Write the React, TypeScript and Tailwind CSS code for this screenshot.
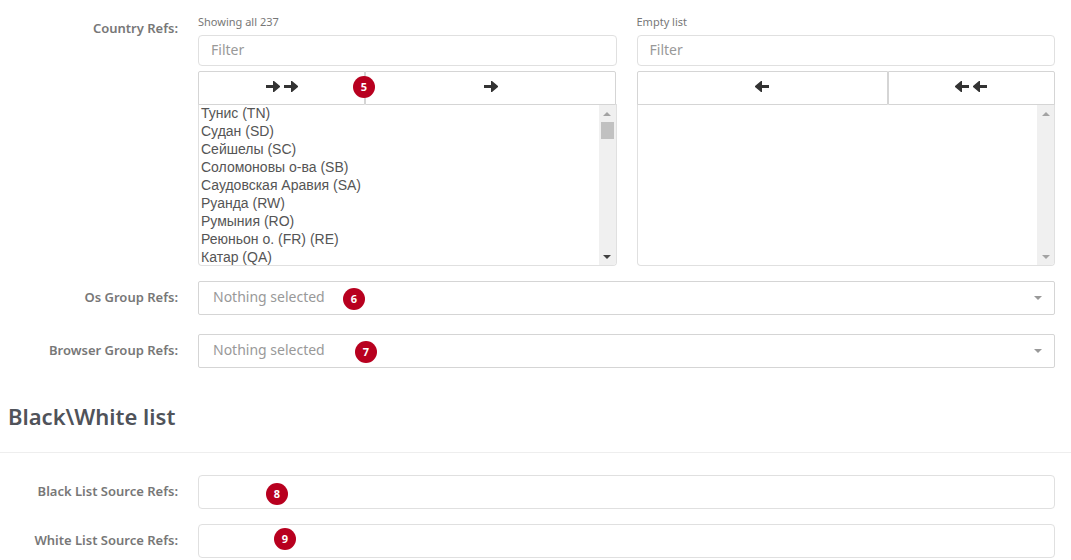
import React from 'react';
import clsx from 'clsx';

const countries = [
    { code: 'TN', name: 'Тунис (TN)' },
    { code: 'SD', name: 'Судан (SD)' },
    { code: 'SC', name: 'Сейшелы (SC)' },
    { code: 'SB', name: 'Соломоновы о-ва (SB)' },
    { code: 'SA', name: 'Саудовская Аравия (SA)' },
    { code: 'RW', name: 'Руанда (RW)' },
    { code: 'RO', name: 'Румыния (RO)' },
    { code: 'RE', name: 'Реюньон о. (FR) (RE)' },
    { code: 'QA', name: 'Катар (QA)' },
];

const Arrow = ({ left }: { left?: boolean }) => (
    <svg width="14" height="11" viewBox="0 0 14 11" fill="#333" className={clsx(left && 'rotate-180')} aria-hidden="true">
        <path d="M0 4H7V0H8L14 5V6L8 11H7V7H0Z" />
    </svg>
);

const Badge = ({ n, className }: { n: number; className: string }) => (
    <span className={clsx('absolute z-10 flex size-[22px] items-center justify-center rounded-full bg-[#b8001f] text-[11px] font-bold text-white pointer-events-none', className)}>
        {n}
    </span>
);

const ScrollTrack = ({ active }: { active?: boolean }) => (
    <div className="flex w-[17px] shrink-0 flex-col items-center justify-between bg-[#f0f0f0] pt-2 pb-0.5" aria-hidden="true">
        <div className="flex flex-col items-center gap-1.5">
            <svg width="8" height="4" viewBox="0 0 8 4" fill="#a3a3a3"><path d="M4 0L8 4H0Z" /></svg>
            {active && <div className="h-[17px] w-[13px] bg-[#c1c1c1]" />}
        </div>
        <svg width="8" height="8" viewBox="0 0 8 8" fill={active ? '#404040' : '#a3a3a3'}><path d="M0 0H8L4 4Z" /></svg>
    </div>
);

interface ListBoxProps {
    id: string;
    info: string;
    reverse?: boolean;
    options: { code: string; name: string }[];
    children?: React.ReactNode;
}

const ListBox = ({ id, info, reverse, options, children }: ListBoxProps) => {
    const button = 'flex h-full items-center justify-center gap-1 border border-[#d5d5d5] bg-white pb-[3px]';

    return (
        <div className="min-w-0 flex-1">
            <div className="mb-[5px] text-[11px] leading-4 text-[#777]">{info}</div>
            <input
                type="text"
                placeholder="Filter"
                aria-label={`${info}: filter`}
                className="mb-[5px] block h-[31px] w-full rounded border border-[#e0e0e0] px-3 pb-0.5 text-sm placeholder:text-[#999]"
            />
            <div className="relative z-10 flex h-[34px]">
                {reverse ? (
                    <>
                        <button type="button" aria-label="Remove selected" className={clsx(button, 'w-3/5 rounded-tl-xs')}><Arrow left /></button>
                        <button type="button" aria-label="Remove all" className={clsx(button, 'w-2/5 rounded-tr-xs')}><Arrow left /><Arrow left /></button>
                    </>
                ) : (
                    <>
                        <button type="button" aria-label="Move all" className={clsx(button, 'w-2/5 rounded-tl-xs')}><Arrow /><Arrow /></button>
                        <button type="button" aria-label="Move selected" className={clsx(button, 'w-3/5 rounded-tr-xs')}><Arrow /></button>
                    </>
                )}
                {children}
            </div>
            <div className="-mt-px flex h-[162px] overflow-hidden rounded-b border border-t-0 border-[#e0e0e0]">
                <select
                    id={id}
                    multiple
                    aria-label={info}
                    className="h-full min-w-0 flex-1 overflow-y-auto p-0 pt-px font-['Liberation_Sans',sans-serif] text-sm text-[#555] [scrollbar-width:none]"
                >
                    {options.map((o) => (
                        <option key={o.code} value={o.code} className="h-[18px] min-h-0 px-0.5 py-0 leading-[18px]">{o.name}</option>
                    ))}
                </select>
                <ScrollTrack active={options.length > 0} />
            </div>
        </div>
    );
};

const Row = ({ id, label, className, children }: { id: string; label: string; className?: string; children: React.ReactNode }) => (
    <div className={clsx('flex gap-5 pr-4', className)}>
        <label htmlFor={id} className="w-[178px] shrink-0 pt-1.5 text-right text-[13px] leading-5 font-semibold text-[#777]">{label}</label>
        <div className="relative flex min-w-0 flex-1 gap-5">{children}</div>
    </div>
);

const Dropdown = ({ id }: { id: string }) => (
    <>
        <select id={id} className="h-[34px] w-full appearance-none rounded-xs border border-[#d5d5d5] bg-white px-3.5 pb-0.5 text-sm text-[#999]">
            <option>Nothing selected</option>
        </select>
        <svg className="pointer-events-none absolute top-[15px] right-[13px]" width="8" height="4" viewBox="0 0 8 4" fill="#999" aria-hidden="true">
            <path d="M0 0H8L4 4Z" />
        </svg>
    </>
);

const field = 'h-[34px] w-full rounded border border-[#e0e0e0] bg-white px-3 text-sm text-[#555]';

const App = () => (
    <form className="min-h-screen bg-white pt-3.5 font-['Noto_Sans',sans-serif]">
        <Row id="countries" label="Country Refs:" className="mb-[15px] [&>label]:pt-1">
            <ListBox id="countries" info="Showing all 237" options={countries}>
                <Badge n={5} className="top-[5px] left-[155px]" />
            </ListBox>
            <ListBox id="chosen" info="Empty list" options={[]} reverse />
        </Row>
        <Row id="os" label="Os Group Refs:" className="mb-[19px]">
            <Dropdown id="os" />
            <Badge n={6} className="top-[7px] left-[145px]" />
        </Row>
        <Row id="browser" label="Browser Group Refs:">
            <Dropdown id="browser" />
            <Badge n={7} className="top-[7px] left-[157px]" />
        </Row>

        {/* Source lists */}
        <h2 className="mt-8 mb-[22px] border-b border-[#eee] px-2 pb-5 text-[22px] leading-8 font-semibold text-[#50535a]">Black\White list</h2>
        <Row id="black" label="Black List Source Refs:" className="mb-[15px]">
            <input id="black" type="text" className={field} />
            <Badge n={8} className="top-2 left-[68px]" />
        </Row>
        <Row id="white" label="White List Source Refs:">
            <input id="white" type="text" className={field} />
            <Badge n={9} className="top-1 left-[76px]" />
        </Row>
    </form>
);

export default App;
